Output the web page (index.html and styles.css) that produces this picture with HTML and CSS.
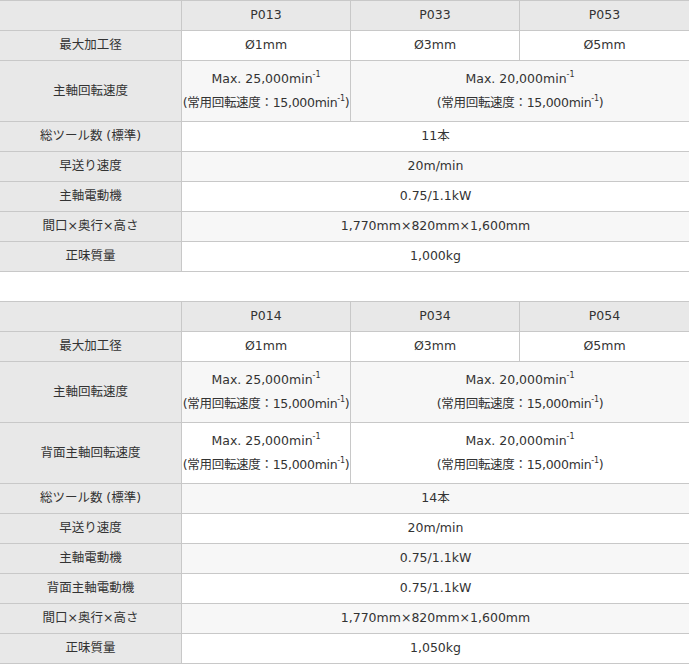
FILE: index.html
```html
<!DOCTYPE html>
<html lang="ja">
<head>
<meta charset="utf-8">
<title>仕様</title>
<link rel="stylesheet" href="styles.css">
</head>
<body>
<table class="spec">
  <colgroup><col class="c-label"><col class="c-model"><col class="c-model"><col class="c-last"></colgroup>
  <thead>
    <tr><th class="corner"></th><th>P013</th><th>P033</th><th>P053</th></tr>
  </thead>
  <tbody>
    <tr><th>最大加工径</th><td>Ø1mm</td><td>Ø3mm</td><td>Ø5mm</td></tr>
    <tr><th>主軸回転速度</th>
      <td class="multi"><div class="ln">Max. 25,000min<sup>-1</sup></div><div class="ln sub">(常用回転速度：15,000min<sup>-1</sup>)</div></td>
      <td class="multi" colspan="2"><div class="ln">Max. 20,000min<sup>-1</sup></div><div class="ln sub">(常用回転速度：15,000min<sup>-1</sup>)</div></td></tr>
    <tr><th>総ツール数 (標準)</th><td colspan="3">11本</td></tr>
    <tr><th>早送り速度</th><td colspan="3">20m/min</td></tr>
    <tr><th>主軸電動機</th><td colspan="3">0.75/1.1kW</td></tr>
    <tr><th>間口×奥行×高さ</th><td colspan="3">1,770mm×820mm×1,600mm</td></tr>
    <tr><th>正味質量</th><td colspan="3">1,000kg</td></tr>
  </tbody>
</table>

<table class="spec">
  <colgroup><col class="c-label"><col class="c-model"><col class="c-model"><col class="c-last"></colgroup>
  <thead>
    <tr><th class="corner"></th><th>P014</th><th>P034</th><th>P054</th></tr>
  </thead>
  <tbody>
    <tr><th>最大加工径</th><td>Ø1mm</td><td>Ø3mm</td><td>Ø5mm</td></tr>
    <tr><th>主軸回転速度</th>
      <td class="multi"><div class="ln">Max. 25,000min<sup>-1</sup></div><div class="ln sub">(常用回転速度：15,000min<sup>-1</sup>)</div></td>
      <td class="multi" colspan="2"><div class="ln">Max. 20,000min<sup>-1</sup></div><div class="ln sub">(常用回転速度：15,000min<sup>-1</sup>)</div></td></tr>
    <tr><th>背面主軸回転速度</th>
      <td class="multi"><div class="ln">Max. 25,000min<sup>-1</sup></div><div class="ln sub">(常用回転速度：15,000min<sup>-1</sup>)</div></td>
      <td class="multi" colspan="2"><div class="ln">Max. 20,000min<sup>-1</sup></div><div class="ln sub">(常用回転速度：15,000min<sup>-1</sup>)</div></td></tr>
    <tr><th>総ツール数 (標準)</th><td colspan="3">14本</td></tr>
    <tr><th>早送り速度</th><td colspan="3">20m/min</td></tr>
    <tr><th>主軸電動機</th><td colspan="3">0.75/1.1kW</td></tr>
    <tr><th>背面主軸電動機</th><td colspan="3">0.75/1.1kW</td></tr>
    <tr><th>間口×奥行×高さ</th><td colspan="3">1,770mm×820mm×1,600mm</td></tr>
    <tr><th>正味質量</th><td colspan="3">1,050kg</td></tr>
  </tbody>
</table>
</body>
</html>
```
FILE: styles.css
```css
body {
  margin: 0;
  background: #fff;
  color: #333;
  font-family: "DejaVu Sans", "Noto Sans CJK JP", sans-serif;
  font-size: 12.5px;
}

.spec {
  width: 689px;
  table-layout: fixed;
  border-collapse: separate;
  border-spacing: 0;
  border-top: 1px solid #c8c8c8;
}

.spec + .spec {
  margin-top: 29px;
}

.c-label { width: 181px; }
.c-model { width: 169px; }
.c-last { width: 170px; }

.spec th,
.spec td {
  box-sizing: border-box;
  padding: 5px 0 7px;
  line-height: 17px;
  text-align: center;
  vertical-align: middle;
  font-weight: normal;
  white-space: nowrap;
  border-bottom: 1px solid #c8c8c8;
  border-left: 1px solid #c8c8c8;
}

.spec td.multi {
  padding: 6px 0;
}

.spec tr > :first-child {
  border-left: none;
}

.spec th {
  background: #e8e8e8;
}

.spec tbody tr:nth-child(even) td {
  background: #f7f7f7;
}

.ln {
  line-height: 24px;
}

.ln.sub {
  letter-spacing: -0.3px;
}

.spec sup {
  font-size: 8px;
  line-height: 0;
  vertical-align: 6px;
}
```
